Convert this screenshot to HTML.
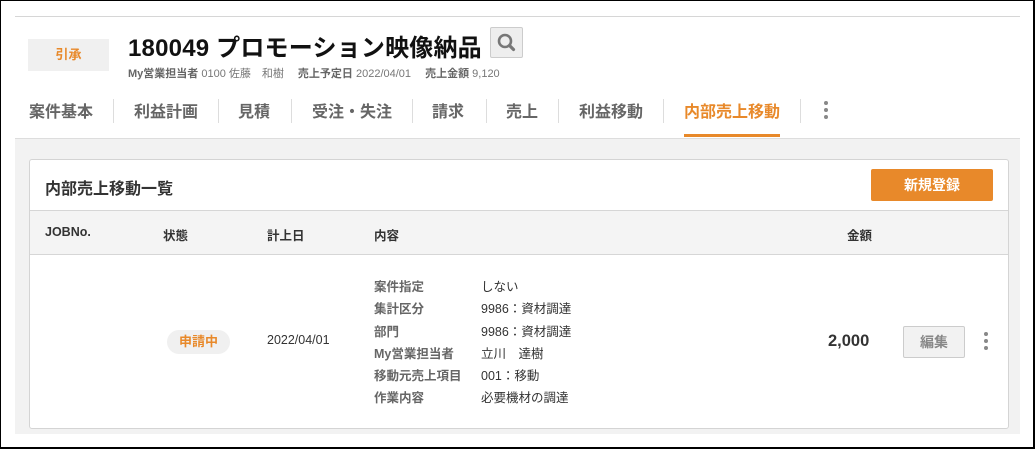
<!DOCTYPE html>
<html><head><meta charset="utf-8"><style>
*{margin:0;padding:0;box-sizing:border-box}
body{width:1035px;height:449px;background:#fff;font-family:"Liberation Sans","Noto Sans CJK JP",sans-serif;position:relative;overflow:hidden;color:#222}
.a{position:absolute;white-space:nowrap}
.frame{position:absolute;left:0;top:0;width:1035px;height:449px;border:1px solid #000;border-right-width:2px;border-bottom-width:2px}
.tab{position:absolute;top:98px;font-size:16px;font-weight:bold;color:#666}
.sep{position:absolute;top:99px;width:1px;height:24px;background:#ddd}
.lbl{font-size:12.5px;color:#666;font-weight:bold}
.val{font-size:12.5px;color:#333}
.dots{position:absolute;width:4px}
.dots i{display:block;width:4px;height:4px;border-radius:2px;background:#888;margin-bottom:3px}
</style></head><body>
<div class="a" style="left:15px;top:16px;width:1005px;height:1px;background:#d6d6d6"></div>
<div class="a" style="left:28px;top:39px;width:81px;height:32px;background:#f0f0f0;color:#e8892a;font-size:13px;font-weight:bold;text-align:center;line-height:32px">引承</div>
<div class="a" style="left:128px;top:28px;font-size:24px;font-weight:bold;color:#111;letter-spacing:0.2px">180049 プロモーション映像納品</div>
<div class="a" style="left:490px;top:27px;width:33px;height:31px;background:#eee;border:1px solid #ccc;border-radius:2px">
<svg width="31" height="29" viewBox="0 0 31 29"><circle cx="14" cy="13" r="6" fill="none" stroke="#777" stroke-width="2.6"/><line x1="18.5" y1="17.5" x2="22.5" y2="21.5" stroke="#777" stroke-width="3.2" stroke-linecap="round"/></svg></div>
<div class="a" style="left:128px;top:65px;font-size:11px;color:#777"><b style="color:#666">My営業担当者</b> 0100 佐藤　和樹　 <b style="color:#666">売上予定日</b> 2022/04/01　 <b style="color:#666">売上金額</b> 9,120</div>

<div class="tab" style="left:29px">案件基本</div>
<div class="sep" style="left:113px"></div>
<div class="tab" style="left:134px">利益計画</div>
<div class="sep" style="left:218px"></div>
<div class="tab" style="left:238px">見積</div>
<div class="sep" style="left:291px"></div>
<div class="tab" style="left:312px">受注・失注</div>
<div class="sep" style="left:412px"></div>
<div class="tab" style="left:432px">請求</div>
<div class="sep" style="left:486px"></div>
<div class="tab" style="left:506px">売上</div>
<div class="sep" style="left:558px"></div>
<div class="tab" style="left:579px">利益移動</div>
<div class="sep" style="left:663px"></div>
<div class="tab" style="left:684px;color:#e8892a">内部売上移動</div>
<div class="a" style="left:684px;top:134px;width:96px;height:3px;background:#e8892a"></div>
<div class="sep" style="left:800px"></div>
<div class="dots" style="left:824px;top:101px"><i></i><i></i><i></i></div>

<div class="a" style="left:15px;top:138px;width:1005px;height:296px;background:#f2f2f2;border-top:1px solid #ddd"></div>
<div class="a" style="left:29px;top:159px;width:980px;height:270px;background:#fff;border:1px solid #d4d4d4;border-radius:3px"></div>
<div class="a" style="left:45px;top:175px;font-size:16px;font-weight:bold;color:#333">内部売上移動一覧</div>
<div class="a" style="left:871px;top:169px;width:122px;height:32px;background:#e8892a;border-radius:2px;color:#fff;font-weight:bold;font-size:14px;text-align:center;line-height:32px">新規登録</div>
<div class="a" style="left:30px;top:210px;width:978px;height:45px;background:#f4f4f4;border-top:1px solid #d6d6d6;border-bottom:1px solid #d6d6d6"></div>
<div class="a lbl" style="left:45px;top:225px;color:#333">JOBNo.</div>
<div class="a lbl" style="left:163px;top:225px;color:#333">状態</div>
<div class="a lbl" style="left:267px;top:225px;color:#333">計上日</div>
<div class="a lbl" style="left:374px;top:225px;color:#333">内容</div>
<div class="a lbl" style="left:847px;top:225px;color:#333">金額</div>

<div class="a" style="left:167px;top:330px;width:63px;height:24px;background:#f0f0f0;border-radius:12px;color:#e8892a;font-size:13px;font-weight:bold;text-align:center;line-height:24px">申請中</div>
<div class="a val" style="left:267px;top:333px">2022/04/01</div>
<div class="a lbl" style="left:374px;top:276px;line-height:22.3px">案件指定<br>集計区分<br>部門<br>My営業担当者<br>移動元売上項目<br>作業内容</div>
<div class="a val" style="left:481px;top:276px;line-height:22.3px">しない<br>9986：資材調達<br>9986：資材調達<br>立川　達樹<br>001：移動<br>必要機材の調達</div>
<div class="a" style="left:828px;top:332px;font-size:16.5px;font-weight:bold;color:#333">2,000</div>
<div class="a" style="left:903px;top:326px;width:62px;height:32px;background:#f2f2f2;border:1px solid #ccc;border-radius:2px;color:#888;font-size:14px;font-weight:bold;text-align:center;line-height:30px">編集</div>
<div class="dots" style="left:984px;top:332px"><i></i><i></i><i></i></div>
<div class="frame"></div>
</body></html>
